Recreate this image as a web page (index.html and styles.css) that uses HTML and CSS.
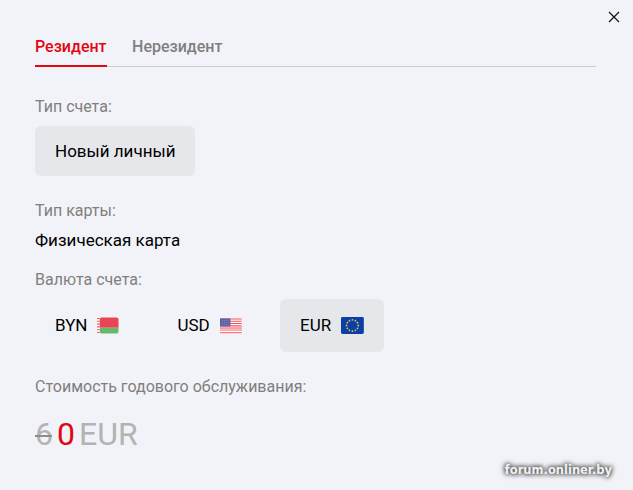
FILE: index.html
```html
<!DOCTYPE html>
<html lang="ru">
<head>
    <meta charset="UTF-8">
    <title>Тип счета</title>
    <link rel="stylesheet" href="styles.css">
</head>
<body>

<div class="modal">
    <button class="close" aria-label="Закрыть">
        <svg width="12" height="12" viewBox="0 0 12 12"><path d="M1 1l10 10M11 1L1 11" stroke="#111" stroke-width="1.2" fill="none"/></svg>
    </button>

    <div class="tabs">
        <a class="tab active">Резидент</a>
        <a class="tab">Нерезидент</a>
    </div>

    <div class="label label-account">Тип счета:</div>
    <div class="option selected account">Новый личный</div>

    <div class="label label-card">Тип карты:</div>
    <div class="card-name">Физическая карта</div>

    <div class="label label-currency">Валюта счета:</div>
    <div class="currencies">
        <div class="option currency">
            BYN
            <svg class="flag" width="23" height="17" viewBox="0 0 23 17">
                <rect x="0" width="3" height="17" fill="#fff"/>
                <path d="M0 1h3M0 4h3M0 7h3M0 10h3M0 13h3M0 16h3" stroke="#ee5a6a" stroke-width="1.2"/>
                <path d="M3 2a2 2 0 0 1 2-2h16a2 2 0 0 1 2 2v9H3z" fill="#ea4557"/>
                <path d="M3 11h20v4a2 2 0 0 1-2 2H5a2 2 0 0 1-2-2z" fill="#66bb6a"/>
            </svg>
        </div>
        <div class="option currency">
            USD
            <svg class="flag" width="23" height="16" viewBox="0 0 23 16">
                <rect width="23" height="16" fill="#fff"/>
                <path d="M0 .6h23M0 3h23M0 5.4h23M0 7.8h23M0 10.2h23M0 12.6h23M0 15.2h23" stroke="#f3505c" stroke-width="1.2"/>
                <path d="M0 10.2h23M0 12.6h23" stroke="#fda4aa" stroke-width="1.6"/>
                <rect width="11" height="8.5" fill="#5a60a8"/>
                <path d="M2 2h8M2 4.2h8M2 6.4h8" stroke="#8a8ec4" stroke-width="1" stroke-dasharray="1 1"/>
            </svg>
        </div>
        <div class="option currency selected">
            EUR
            <svg class="flag" width="23" height="17" viewBox="0 0 23 17">
                <rect width="23" height="17" rx="1.5" fill="#0b3fa8"/>
                <g fill="#e6c23c">
                    <circle cx="11.5" cy="2.8" r=".9"/><circle cx="14.5" cy="3.6" r=".9"/><circle cx="16.6" cy="5.7" r=".9"/>
                    <circle cx="17.4" cy="8.5" r=".9"/><circle cx="16.6" cy="11.3" r=".9"/><circle cx="14.5" cy="13.4" r=".9"/>
                    <circle cx="11.5" cy="14.2" r=".9"/><circle cx="8.5" cy="13.4" r=".9"/><circle cx="6.4" cy="11.3" r=".9"/>
                    <circle cx="5.6" cy="8.5" r=".9"/><circle cx="6.4" cy="5.7" r=".9"/><circle cx="8.5" cy="3.6" r=".9"/>
                </g>
            </svg>
        </div>
    </div>

    <div class="label label-price">Стоимость годового обслуживания:</div>
    <div class="price">
        <span class="old">6<i class="strike"></i></span>
        <span class="new">0</span>
        <span class="unit">EUR</span>
    </div>
</div>

<div class="watermark">forum.onliner.by</div>

</body>
</html>
```

FILE: styles.css
```css
html, body {
    margin: 0;
    padding: 0;
    height: 100%;
    overflow: hidden;
}
body {
    font-family: Roboto, sans-serif;
    background-color: #f2f3f8;
    color: #000;
}
.modal {
    padding: 37px 37px 0 35px;
}
.close {
    position: absolute;
    top: 11px;
    right: 13px;
    padding: 0;
    border: 0;
    background: none;
    line-height: 0;
}
.tabs {
    display: flex;
    gap: 25.5px;
    border-bottom: 1px solid #cccccc;
}
.tab {
    font-size: 16px;
    font-weight: 500;
    line-height: 19px;
    padding-bottom: 9px;
    margin-bottom: -1px;
    color: #7f7f7f;
    border-bottom: 2px solid transparent;
}
.tab.active {
    color: #e30613;
    border-bottom-color: #e30613;
}
.label {
    font-size: 16px;
    line-height: 19px;
    color: #7f7f7f;
}
.label-account {
    margin-top: 30px;
}
.label-card {
    margin-top: 25px;
}
.label-currency {
    margin-top: 20px;
}
.label-price {
    margin-top: 25px;
}
.option {
    font-size: 17px;
    line-height: 19px;
    border-radius: 6px;
    display: flex;
    align-items: center;
    box-sizing: border-box;
    white-space: nowrap;
}
.option.selected {
    background-color: #e6e7ea;
}
.account {
    margin-top: 10px;
    width: 160px;
    height: 50px;
    padding: 0 20px;
}
.card-name {
    margin-top: 11px;
    font-size: 17px;
    line-height: 19px;
}
.currencies {
    display: flex;
    gap: 18.5px;
    margin-top: 10px;
}
.currency {
    width: 104px;
    height: 53px;
    padding: 0 20px;
    gap: 10px;
}
.price {
    margin-top: 20px;
    font-size: 32px;
    line-height: 36px;
    color: #b3b3b3;
    display: flex;
    gap: 4px;
}
.old {
    position: relative;
}
.strike {
    position: absolute;
    left: 0;
    right: 1px;
    top: 19px;
    height: 2px;
    background-color: #8c8c8c;
}
.new {
    color: #e30613;
}
.watermark {
    position: absolute;
    right: 21px;
    bottom: 13px;
    font-family: "DejaVu Sans", sans-serif;
    font-size: 11.5px;
    font-weight: bold;
    color: #f0f0f0;
    text-shadow: 0 0 4px #555, 0 0 4px #555, 0 0 6px #777;
}
```
